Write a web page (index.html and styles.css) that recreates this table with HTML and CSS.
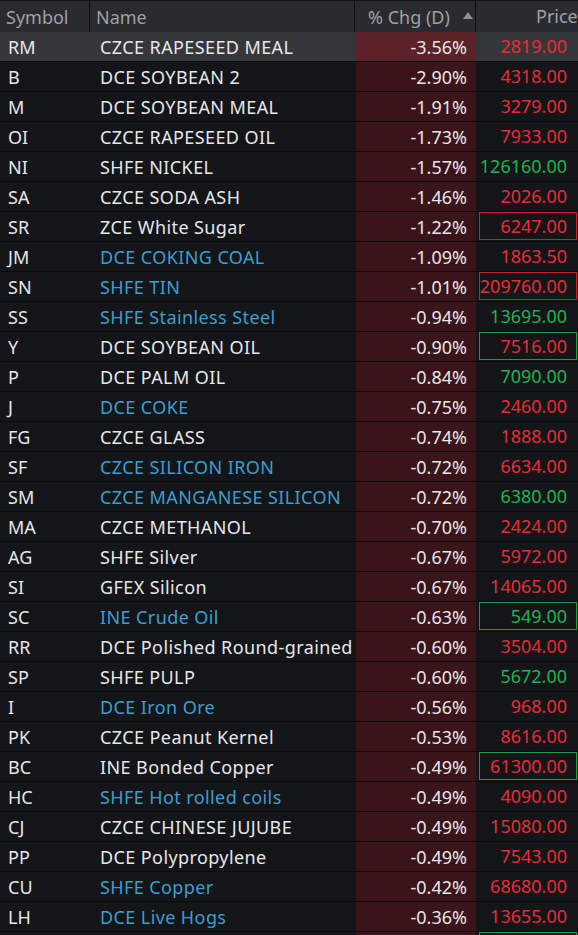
FILE: index.html
```html
<!DOCTYPE html>
<html lang="en">
<head>
  <meta charset="UTF-8" />
  <title>Commodity Futures</title>
  <link rel="stylesheet" href="styles.css">
</head>
<body>
  <div class="board">
    <div class="row head">
      <div class="cell sym">Symbol</div>
      <div class="cell name">Name</div>
      <div class="cell pct">% Chg (D) <svg class="sort" width="10" height="7" viewBox="0 0 10 7"><path d="M5 0 L10 7 L0 7 Z" fill="#8e9198"/></svg></div>
      <div class="cell price">Price</div>
    </div>

    <div class="row selected"><div class="cell sym">RM</div><div class="cell name">CZCE RAPESEED MEAL</div><div class="cell pct">-3.56%</div><div class="cell price down"><span class="tick">2819.00</span></div></div>
    <div class="row"><div class="cell sym">B</div><div class="cell name">DCE SOYBEAN 2</div><div class="cell pct">-2.90%</div><div class="cell price down"><span class="tick">4318.00</span></div></div>
    <div class="row"><div class="cell sym">M</div><div class="cell name">DCE SOYBEAN MEAL</div><div class="cell pct">-1.91%</div><div class="cell price down"><span class="tick">3279.00</span></div></div>
    <div class="row"><div class="cell sym">OI</div><div class="cell name">CZCE RAPESEED OIL</div><div class="cell pct">-1.73%</div><div class="cell price down"><span class="tick">7933.00</span></div></div>
    <div class="row"><div class="cell sym">NI</div><div class="cell name">SHFE NICKEL</div><div class="cell pct">-1.57%</div><div class="cell price up"><span class="tick">126160.00</span></div></div>
    <div class="row"><div class="cell sym">SA</div><div class="cell name">CZCE SODA ASH</div><div class="cell pct">-1.46%</div><div class="cell price down"><span class="tick">2026.00</span></div></div>
    <div class="row"><div class="cell sym">SR</div><div class="cell name">ZCE White Sugar</div><div class="cell pct">-1.22%</div><div class="cell price down"><span class="tick tick-red">6247.00</span></div></div>
    <div class="row"><div class="cell sym">JM</div><div class="cell name link">DCE COKING COAL</div><div class="cell pct">-1.09%</div><div class="cell price down"><span class="tick">1863.50</span></div></div>
    <div class="row"><div class="cell sym">SN</div><div class="cell name link">SHFE TIN</div><div class="cell pct">-1.01%</div><div class="cell price down"><span class="tick tick-red">209760.00</span></div></div>
    <div class="row"><div class="cell sym">SS</div><div class="cell name link">SHFE Stainless Steel</div><div class="cell pct">-0.94%</div><div class="cell price up"><span class="tick">13695.00</span></div></div>
    <div class="row"><div class="cell sym">Y</div><div class="cell name">DCE SOYBEAN OIL</div><div class="cell pct">-0.90%</div><div class="cell price down"><span class="tick tick-green">7516.00</span></div></div>
    <div class="row"><div class="cell sym">P</div><div class="cell name">DCE PALM OIL</div><div class="cell pct">-0.84%</div><div class="cell price up"><span class="tick">7090.00</span></div></div>
    <div class="row"><div class="cell sym">J</div><div class="cell name link">DCE COKE</div><div class="cell pct">-0.75%</div><div class="cell price down"><span class="tick">2460.00</span></div></div>
    <div class="row"><div class="cell sym">FG</div><div class="cell name">CZCE GLASS</div><div class="cell pct">-0.74%</div><div class="cell price down"><span class="tick">1888.00</span></div></div>
    <div class="row"><div class="cell sym">SF</div><div class="cell name link">CZCE SILICON IRON</div><div class="cell pct">-0.72%</div><div class="cell price down"><span class="tick">6634.00</span></div></div>
    <div class="row"><div class="cell sym">SM</div><div class="cell name link">CZCE MANGANESE SILICON</div><div class="cell pct">-0.72%</div><div class="cell price up"><span class="tick">6380.00</span></div></div>
    <div class="row"><div class="cell sym">MA</div><div class="cell name">CZCE METHANOL</div><div class="cell pct">-0.70%</div><div class="cell price down"><span class="tick">2424.00</span></div></div>
    <div class="row"><div class="cell sym">AG</div><div class="cell name">SHFE Silver</div><div class="cell pct">-0.67%</div><div class="cell price down"><span class="tick">5972.00</span></div></div>
    <div class="row"><div class="cell sym">SI</div><div class="cell name">GFEX Silicon</div><div class="cell pct">-0.67%</div><div class="cell price down"><span class="tick">14065.00</span></div></div>
    <div class="row"><div class="cell sym">SC</div><div class="cell name link">INE Crude Oil</div><div class="cell pct">-0.63%</div><div class="cell price up"><span class="tick tick-green">549.00</span></div></div>
    <div class="row"><div class="cell sym">RR</div><div class="cell name">DCE Polished Round-grained</div><div class="cell pct">-0.60%</div><div class="cell price down"><span class="tick">3504.00</span></div></div>
    <div class="row"><div class="cell sym">SP</div><div class="cell name">SHFE PULP</div><div class="cell pct">-0.60%</div><div class="cell price up"><span class="tick">5672.00</span></div></div>
    <div class="row"><div class="cell sym">I</div><div class="cell name link">DCE Iron Ore</div><div class="cell pct">-0.56%</div><div class="cell price down"><span class="tick">968.00</span></div></div>
    <div class="row"><div class="cell sym">PK</div><div class="cell name">CZCE Peanut Kernel</div><div class="cell pct">-0.53%</div><div class="cell price down"><span class="tick">8616.00</span></div></div>
    <div class="row"><div class="cell sym">BC</div><div class="cell name">INE Bonded Copper</div><div class="cell pct">-0.49%</div><div class="cell price down"><span class="tick tick-green">61300.00</span></div></div>
    <div class="row"><div class="cell sym">HC</div><div class="cell name link">SHFE Hot rolled coils</div><div class="cell pct">-0.49%</div><div class="cell price down"><span class="tick">4090.00</span></div></div>
    <div class="row"><div class="cell sym">CJ</div><div class="cell name">CZCE CHINESE JUJUBE</div><div class="cell pct">-0.49%</div><div class="cell price down"><span class="tick">15080.00</span></div></div>
    <div class="row"><div class="cell sym">PP</div><div class="cell name">DCE Polypropylene</div><div class="cell pct">-0.49%</div><div class="cell price down"><span class="tick">7543.00</span></div></div>
    <div class="row"><div class="cell sym">CU</div><div class="cell name link">SHFE Copper</div><div class="cell pct">-0.42%</div><div class="cell price down"><span class="tick">68680.00</span></div></div>
    <div class="row"><div class="cell sym">LH</div><div class="cell name link">DCE Live Hogs</div><div class="cell pct">-0.36%</div><div class="cell price down"><span class="tick">13655.00</span></div></div>
    <div class="row"><div class="cell sym"></div><div class="cell name"></div><div class="cell pct"></div><div class="cell price"><span class="tick tick-green"></span></div></div>
  </div>
</body>
</html>
```

FILE: styles.css
```css
html, body {
  margin: 0;
  padding: 0;
  background: #131519;
  overflow: hidden;
}

body {
  font-family: "Noto Sans", "Noto Sans CJK SC", sans-serif;
  font-size: 18px;
  color: #e6e7ea;
}

.board {
  width: 578px;
}

.row {
  display: grid;
  grid-template-columns: 90px 265px 121px 102px;
  height: 30px;
  box-sizing: border-box;
  border-bottom: 1px solid #0a0b0e;
}

.cell {
  display: flex;
  align-items: center;
  white-space: nowrap;
  overflow: hidden;
  line-height: 1;
}

.sym {
  padding-left: 8px;
}

.name {
  padding-left: 10px;
  letter-spacing: 0.4px;
}

.name.link {
  color: #3c9fd0;
}

.pct {
  justify-content: flex-end;
  padding-right: 9px;
  background: #3a1418;
  margin-left: 1px;
}

.price {
  padding: 0 1px 1px 3px;
}

.price.down {
  color: #ec2a35;
}

.price.up {
  color: #1fb44c;
}

.tick {
  display: flex;
  align-items: center;
  justify-content: flex-end;
  width: 100%;
  height: 100%;
  box-sizing: border-box;
  padding-right: 9px;
  border: 1px solid transparent;
}

.tick.tick-red {
  border: 1px solid #c4202c;
}

.tick.tick-green {
  border: 1px solid #1d9a45;
}

/* header */
.head {
  height: 32px;
  background: #2a2b2f;
  border-top: 1px solid #111214;
  border-bottom: none;
  color: #9da1a8;
}

.head .cell {
  border-right: 1px solid #0d0e10;
}

.head .sym {
  padding-left: 6px;
}

.head .name {
  padding-left: 6px;
  letter-spacing: 0;
}

.head .pct {
  background: none;
  margin-left: 0;
  justify-content: flex-start;
  padding: 0 0 0 13px;
  gap: 13px;
}

.head .price {
  padding-left: 60px;
  border-right: none;
}

.sort {
  margin-top: -2px;
}

.selected {
  background: #36373b;
}

.selected .pct {
  background: #5b2227;
}
```
